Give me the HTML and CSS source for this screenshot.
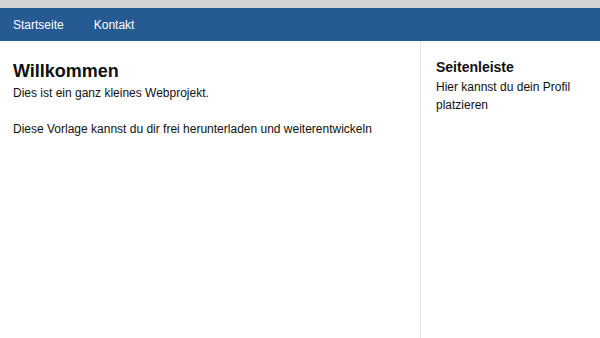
FILE: index.html
```html
<!DOCTYPE html>
<html lang="de">
<head>
    <meta charset="UTF-8">
    <meta name="viewport" content="width=device-width, initial-scale=1.0">
    <title>Webprojekt</title>
    <link rel="stylesheet" href="styles.css">
</head>
<body>
    <div class="topbar"></div>

    <!-- Navigation -->
    <nav class="nav">
        <a href="#">Startseite</a>
        <a href="#">Kontakt</a>
    </nav>

    <div class="page">
        <div class="main">
            <h1>Willkommen</h1>
            <p>Dies ist ein ganz kleines Webprojekt.</p>
            <p>Diese Vorlage kannst du dir frei herunterladen und weiterentwickeln</p>
        </div>

        <!-- Seitenleiste rechts -->
        <div class="sidebar">
            <h2>Seitenleiste</h2>
            <p>Hier kannst du dein Profil platzieren</p>
        </div>
    </div>
</body>
</html>
```

FILE: styles.css
```css
html, body {
    height: 100%;
}

body {
    margin: 0;
    display: flex;
    flex-direction: column;
    font-family: "Liberation Sans", Arial, sans-serif;
    font-size: 12px;
    color: #111;
    background-color: #fff;
}

.topbar {
    height: 8px;
    background-color: #d4d4d4;
}

.nav {
    height: 33px;
    display: flex;
    align-items: center;
    gap: 30px;
    padding-left: 13px;
    background-color: #265a93;
}

.nav a {
    color: #fff;
    text-decoration: none;
    font-size: 12px;
}

.page {
    flex: 1;
    display: flex;
}

.main {
    width: 407px;
    padding: 20px 0 0 13px;
}

.main h1 {
    margin: 0 0 3px;
    font-size: 18px;
    line-height: 20px;
}

.main p {
    margin: 0 0 18px;
    line-height: 18px;
}

.sidebar {
    flex: 1;
    padding: 17px 10px 0 15px;
    border-left: 1px solid #e6e6e6;
}

.sidebar h2 {
    margin: 0 0 2px;
    font-size: 14px;
    line-height: 18px;
}

.sidebar p {
    margin: 0;
    line-height: 18px;
}
```
